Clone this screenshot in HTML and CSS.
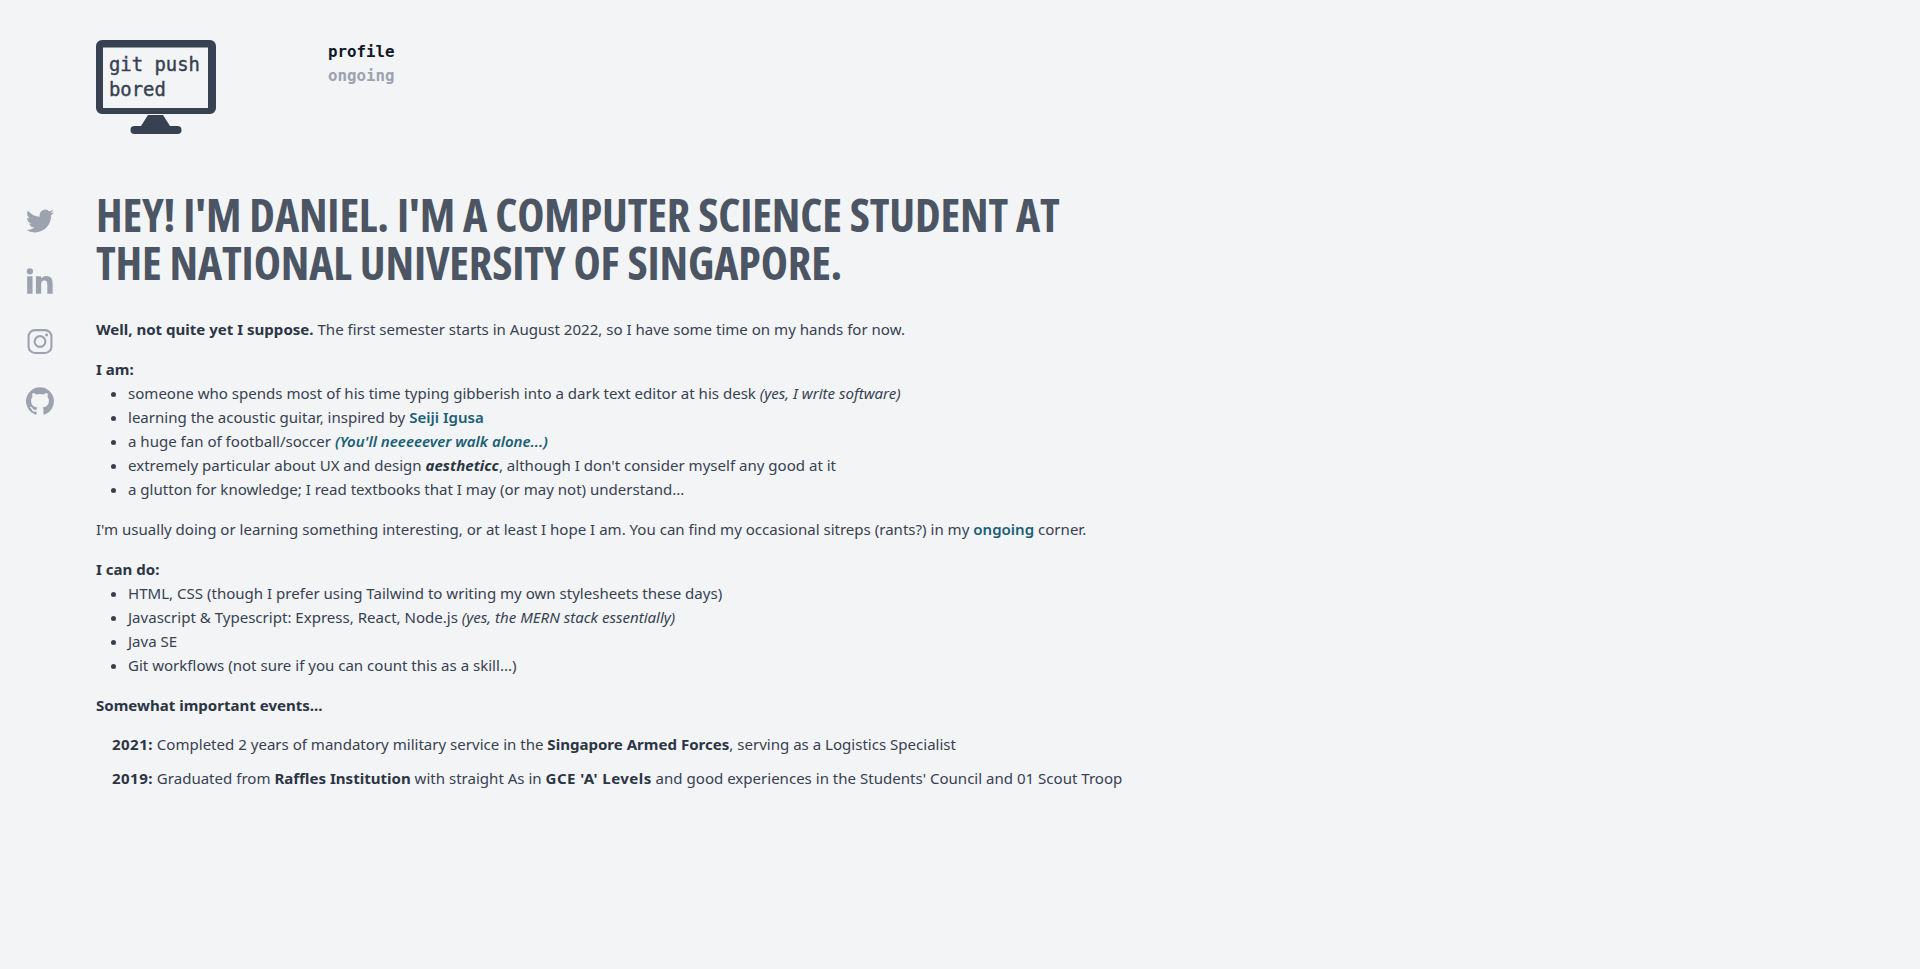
FILE: index.html
```html
<!DOCTYPE html>
<html lang="en">
<head>
  <meta charset="UTF-8" />
  <meta name="viewport" content="width=device-width, initial-scale=1.0"/>
  <title>git push bored</title>
  <link rel="stylesheet" href="styles.css">
</head>
<body>
  <aside class="social">
    <a href="#" class="social-link" aria-label="Twitter">
      <svg viewBox="0 0 24 24" class="social-icon"><path d="M23.95 4.57a10 10 0 0 1-2.82.77 4.96 4.96 0 0 0 2.16-2.72c-.95.55-2 .96-3.12 1.19a4.92 4.92 0 0 0-8.38 4.48C7.69 8.1 4.07 6.13 1.64 3.16a4.82 4.82 0 0 0-.67 2.48c0 1.71.87 3.2 2.19 4.1a4.9 4.9 0 0 1-2.23-.62v.06a4.92 4.92 0 0 0 3.95 4.83 5 5 0 0 1-2.21.08 4.94 4.94 0 0 0 4.6 3.42A9.87 9.87 0 0 1 0 19.54a14 14 0 0 0 7.56 2.21c9.05 0 14-7.5 14-13.98 0-.21 0-.42-.02-.63a9.94 9.94 0 0 0 2.46-2.55z"/></svg>
    </a>
    <a href="#" class="social-link" aria-label="LinkedIn">
      <svg viewBox="0 0 24 24" class="social-icon"><path d="M1 8h4.6v15H1zM3.3 1a2.7 2.7 0 1 1 0 5.4 2.7 2.7 0 0 1 0-5.4zM8.5 8h4.4v2.05h.06c.62-1.16 2.12-2.4 4.36-2.4 4.66 0 5.52 3.07 5.52 7.06V23h-4.6v-7.35c0-1.75-.03-4-2.44-4-2.44 0-2.81 1.9-2.81 3.87V23H8.5z"/></svg>
    </a>
    <a href="#" class="social-link" aria-label="Instagram">
      <svg viewBox="-1.5 -2 27 27" class="social-icon"><path fill-rule="evenodd" d="M7 0h10a7 7 0 0 1 7 7v10a7 7 0 0 1-7 7H7a7 7 0 0 1-7-7V7a7 7 0 0 1 7-7zm0 2A5 5 0 0 0 2 7v10a5 5 0 0 0 5 5h10a5 5 0 0 0 5-5V7a5 5 0 0 0-5-5zM12 5.800a6.200 6.200 0 1 1 0 12.400 6.200 6.200 0 0 1 0-12.400zM12 7.800a4.200 4.200 0 1 0 0 8.400 4.200 4.200 0 0 0 0-8.400zM18.400 4.200a1.440 1.440 0 1 1 0 2.880 1.440 1.440 0 0 1 0-2.880z"/></svg>
    </a>
    <a href="#" class="social-link" aria-label="GitHub">
      <svg viewBox="0 0 24 24" class="social-icon"><path d="M12 .3a12 12 0 0 0-3.8 23.38c.6.12.83-.26.83-.57l-.02-2.04c-3.34.72-4.04-1.61-4.04-1.61-.55-1.39-1.34-1.76-1.34-1.76-1.08-.74.09-.73.09-.73 1.2.09 1.84 1.24 1.84 1.24 1.07 1.83 2.81 1.3 3.5 1 .1-.78.42-1.31.76-1.61-2.67-.3-5.47-1.33-5.47-5.93 0-1.31.47-2.38 1.24-3.22-.14-.3-.54-1.52.1-3.18 0 0 1-.32 3.3 1.23a11.500 11.500 0 0 1 6 0c2.280-1.550 3.290-1.230 3.290-1.230.640 1.660.240 2.880.120 3.180a4.650 4.650 0 0 1 1.230 3.220c0 4.610-2.800 5.630-5.480 5.920.420.360.810 1.100.810 2.220l-.010 3.290c0 .320.210.690.820.570A12 12 0 0 0 12 .3z"/></svg>
    </a>
  </aside>

  <main class="content">
    <header class="top">
      <a href="#" class="logo">
        <svg viewBox="0 0 120 94" class="logo-art">
          <path fill-rule="evenodd" d="M6 0h108a6 6 0 0 1 6 6v62a6 6 0 0 1-6 6H6a6 6 0 0 1-6-6V6a6 6 0 0 1 6-6zM7 7.500v60.500h105V7.500z"/>
          <path d="M52 75h15l7 11h7.500a4 4 0 0 1 0 8h-43a4 4 0 0 1 0-8H45z"/>
        </svg>
        <span class="logo-text">git push<br>bored</span>
      </a>
      <nav class="nav">
        <a href="#" class="nav-link nav-active">profile</a>
        <a href="#" class="nav-link">ongoing</a>
      </nav>
    </header>

    <h1 class="title">Hey! I'm Daniel. I'm a Computer Science student at the National University of Singapore.</h1>

    <p class="para"><b>Well, not quite yet I suppose.</b> The first semester starts in August 2022, so I have some time on my hands for now.</p>

    <div class="para">
      <b>I am:</b>
      <ul class="list">
        <li>someone who spends most of his time typing gibberish into a dark text editor at his desk <i>(yes, I write software)</i></li>
        <li>learning the acoustic guitar, inspired by <a href="#" class="link">Seiji Igusa</a></li>
        <li>a huge fan of football/soccer <a href="#" class="link"><i>(You'll neeeeever walk alone...)</i></a></li>
        <li>extremely particular about UX and design <b><i>aestheticc</i></b>, although I don't consider myself any good at it</li>
        <li>a glutton for knowledge; I read textbooks that I may (or may not) understand...</li>
      </ul>
    </div>

    <p class="para">I'm usually doing or learning something interesting, or at least I hope I am. You can find my occasional sitreps (rants?) in my <a href="#" class="link">ongoing</a> corner.</p>

    <div class="para">
      <b>I can do:</b>
      <ul class="list">
        <li>HTML, CSS (though I prefer using Tailwind to writing my own stylesheets these days)</li>
        <li>Javascript &amp; Typescript: Express, React, Node.js <i>(yes, the MERN stack essentially)</i></li>
        <li>Java SE</li>
        <li>Git workflows (not sure if you can count this as a skill...)</li>
      </ul>
    </div>

    <p class="para events-head"><b>Somewhat important events...</b></p>

    <p class="para event"><b class="wide">2021:</b> Completed 2 years of mandatory military service in the <b>Singapore Armed Forces</b>, serving as a Logistics Specialist</p>
    <p class="para event"><b class="wide">2019:</b> Graduated from <b>Raffles Institution</b> with straight As in <b class="wide">GCE 'A' Levels</b> and good experiences in the Students' Council and 01 Scout Troop</p>
  </main>
</body>
</html>
```

FILE: styles.css
```css
* {
  box-sizing: border-box;
}

body {
  margin: 0;
  min-height: 100vh;
  display: flex;
  background-color: #f3f4f6;
  color: #374151;
  font-family: "Noto Sans", "Open Sans", sans-serif;
  font-size: 15.05px;
  line-height: 24px;
}

a {
  color: inherit;
  text-decoration: none;
}

.social {
  width: 96px;
  padding: 207px 0 0 26px;
  display: flex;
  flex-direction: column;
  gap: 32px;
  flex-shrink: 0;
}

.social-link {
  display: block;
  width: 28px;
  height: 28px;
}

.social-icon {
  display: block;
  width: 28px;
  height: 28px;
  fill: #9ca3af;
}

.content {
  flex: 1;
  padding-top: 40px;
}

.top {
  display: flex;
  gap: 112px;
}

.logo {
  position: relative;
  display: block;
  width: 120px;
  height: 94px;
  color: #374151;
}

.logo-art {
  display: block;
  width: 120px;
  height: 94px;
  fill: #374151;
}

.logo-text {
  position: absolute;
  left: 13px;
  top: 12px;
  font-family: "DejaVu Sans Mono", monospace;
  font-size: 18.9px;
  line-height: 25px;
  white-space: nowrap;
  -webkit-text-stroke: 0.4px #374151;
}

.nav {
  display: flex;
  flex-direction: column;
  font-family: "DejaVu Sans Mono", monospace;
  font-size: 15.8px;
  font-weight: bold;
}

.nav-link {
  color: #9ca3af;
}

.nav-active {
  color: #111827;
}

.title {
  margin: 56px 0 31px;
  max-width: 1000px;
  color: #4b5563;
  font-family: "Open Sans", "Noto Sans", sans-serif;
  font-stretch: 75%;
  font-size: 46px;
  line-height: 48px;
  font-weight: bold;
  letter-spacing: -0.17px;
  text-transform: uppercase;
}

.para {
  margin: 0 0 16px;
}

.para b {
  font-weight: 700;
  color: #2b3544;
}

.para .wide {
  letter-spacing: 0.45px;
}

.list {
  margin: 0;
  padding-left: 32px;
  list-style: disc;
}

.link {
  color: #1a6075;
  font-weight: 600;
}

.events-head {
  margin-bottom: 15px;
}

.event {
  padding-left: 16px;
  margin-bottom: 10px;
}
```
